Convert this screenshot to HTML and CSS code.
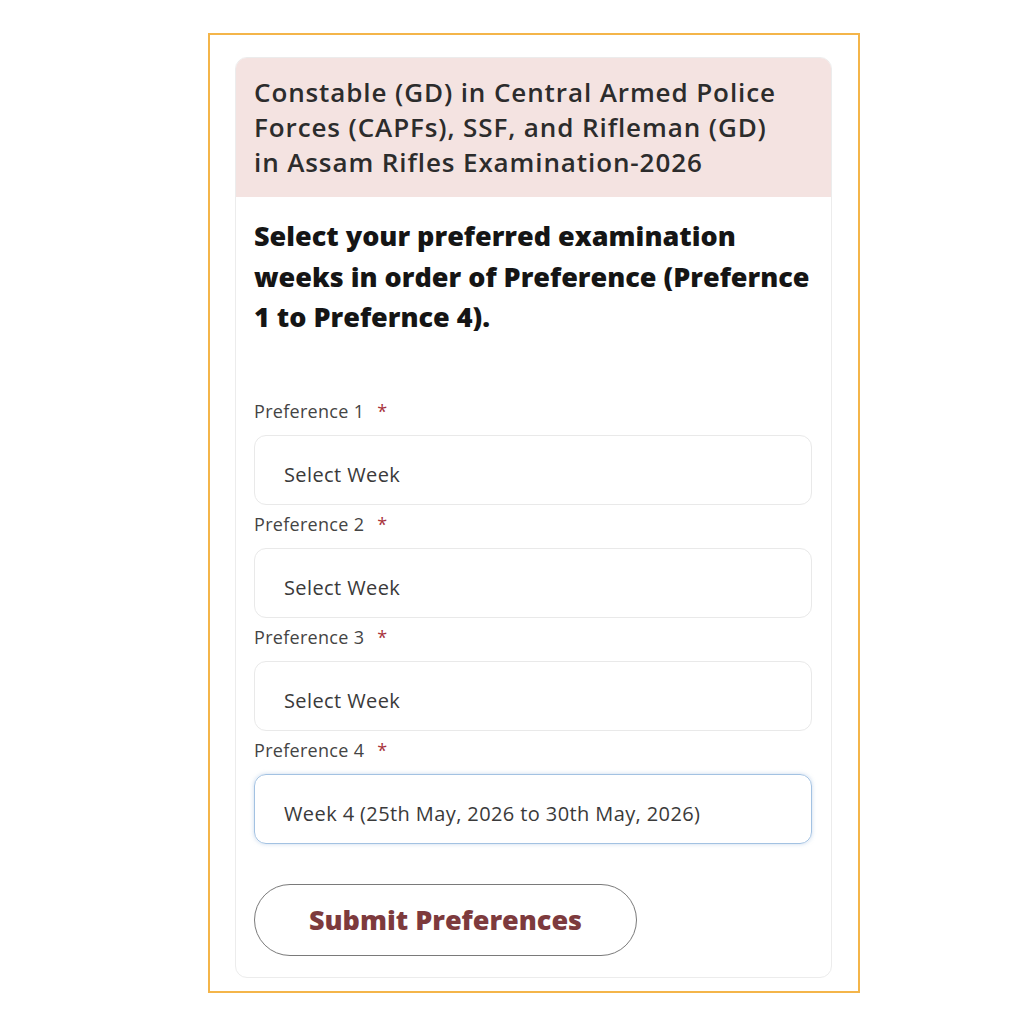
FILE: index.html
```html
<!DOCTYPE html>
<html lang="en">
<head>
    <meta charset="UTF-8">
    <meta name="viewport" content="width=device-width, initial-scale=1.0">
    <title>Exam Week Preferences</title>
    <link rel="stylesheet" href="styles.css">
</head>
<body>
    <div class="frame">
        <div class="card">
            <div class="card-header">
                Constable (GD) in Central Armed Police Forces (CAPFs), SSF, and Rifleman (GD) in Assam Rifles Examination-2026
            </div>
            <div class="card-body">
                <h2 class="intro">Select your preferred examination weeks in order of Preference (Prefernce 1 to Prefernce 4).</h2>

                <div class="fields">
                    <label class="field-label">Preference 1 <span class="req">*</span></label>
                    <div class="select">Select Week</div>

                    <label class="field-label">Preference 2 <span class="req">*</span></label>
                    <div class="select">Select Week</div>

                    <label class="field-label">Preference 3 <span class="req">*</span></label>
                    <div class="select">Select Week</div>

                    <label class="field-label">Preference 4 <span class="req">*</span></label>
                    <div class="select focused">Week 4 (25th May, 2026 to 30th May, 2026)</div>
                </div>

                <button class="submit">Submit Preferences</button>
            </div>
        </div>
    </div>
</body>
</html>
```

FILE: styles.css
```css
body {
    margin: 0;
    background: #fff;
    font-family: "Open Sans", "Lato", sans-serif;
    color: #222;
}
.frame {
    margin: 33px 0 0 208px;
    width: 652px;
    height: 960px;
    box-sizing: border-box;
    border: 2px solid #f4b54a;
    padding: 22px 26px 0 25px;
}
.card {
    border: 1px solid #ececec;
    border-radius: 12px;
    overflow: hidden;
    background: #fff;
}
.card-header {
    background: #f4e3e1;
    padding: 17px 48px 17px 18px;
    font-size: 26px;
    font-weight: 600;
    line-height: 35px;
    letter-spacing: 0.9px;
    color: #2c2c2c;
}
.card-body {
    padding: 19px 19px 21px 18px;
}
.intro {
    margin: 0 0 61px 0;
    font-size: 27px;
    line-height: 40.5px;
    font-weight: 800;
    color: #151515;
}
.fields {
    display: flex;
    flex-direction: column;
}
.field-label {
    font-size: 18px;
    line-height: 24px;
    letter-spacing: 0.3px;
    color: #444;
    margin-bottom: 12px;
}
.req {
    color: #a8323c;
    margin-left: 8px;
}
.select {
    height: 70px;
    box-sizing: border-box;
    border: 1px solid #e9e9e9;
    border-radius: 12px;
    padding: 10px 29px 0 29px;
    display: flex;
    align-items: center;
    font-size: 20px;
    letter-spacing: 0.4px;
    color: #3a3a3a;
    margin-bottom: 7px;
}
.select.focused {
    border: 1.5px solid #a3c2e2;
    box-shadow: 0 0 4px rgba(120, 160, 210, 0.4);
}
.submit {
    margin-top: 33px;
    width: 383px;
    height: 72px;
    border: 1.5px solid #7a7a7a;
    border-radius: 36px;
    background: #fff;
    font-family: inherit;
    font-size: 27px;
    font-weight: 800;
    color: #7d3a3d;
    cursor: pointer;
}
```
